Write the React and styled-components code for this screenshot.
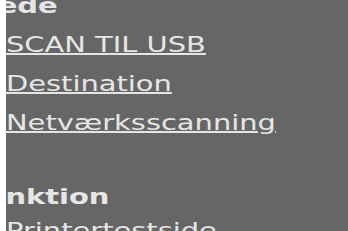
import React from "react";
import styled, { createGlobalStyle } from "styled-components";

const GlobalStyle = createGlobalStyle`
  html, body {
    margin: 0;
    padding: 0;
    background: #ffffff;
    overflow: hidden;
  }
`;

const Page = styled.div`
  display: flex;
  width: 348px;
  height: 231px;
  background: #ffffff;
`;

const Gutter = styled.div`
  flex: 0 0 6px;
  background: #ffffff;
`;

const Panel = styled.div`
  flex: 1;
  overflow: hidden;
  background: #666666;
`;

/* the menu is shown stretched sideways, like the captured page */
const Menu = styled.nav`
  display: flex;
  flex-direction: column;
  align-items: flex-start;
  margin-top: -13px;
  transform: scaleX(1.41);
  transform-origin: left top;
  font-family: "DejaVu Sans", Verdana, sans-serif;
  font-size: 20.5px;
  color: #e6e6e6;
`;

const SectionTitle = styled.div`
  margin-left: ${(props) => props.$shift}px;
  margin-top: ${(props) => props.$gap || 0}px;
  line-height: ${(props) => props.$lineHeight || 39}px;
  font-weight: bold;
  white-space: nowrap;
`;

const MenuLink = styled.a`
  display: block;
  line-height: 39px;
  color: #e6e6e6;
  text-decoration: underline;
  text-decoration-thickness: 1.5px;
  white-space: nowrap;
  cursor: pointer;
`;

const App = () => (
  <Page>
    <GlobalStyle />
    <Gutter />
    <Panel>
      <Menu>
        <SectionTitle $shift={-99}>Avancerede</SectionTitle>
        <MenuLink>SCAN TIL USB</MenuLink>
        <MenuLink>Destination</MenuLink>
        <MenuLink>Netværksscanning</MenuLink>
        <SectionTitle $shift={-28} $gap={39} $lineHeight={30}>
          Funktion
        </SectionTitle>
        <MenuLink>Printertestside</MenuLink>
      </Menu>
    </Panel>
  </Page>
);

export default App;
